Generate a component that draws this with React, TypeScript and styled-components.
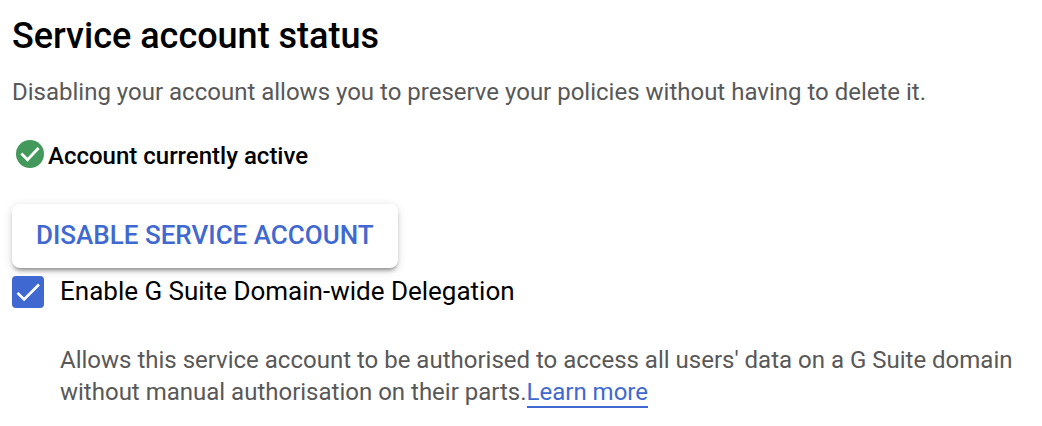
import React from "react";
import styled, { createGlobalStyle } from "styled-components";

const GlobalStyle = createGlobalStyle`
  body {
    margin: 0;
    background: #fff;
    color: #000;
    font-family: Roboto, sans-serif;
    font-size: 24px;
    line-height: 32px;
  }
`;

const Panel = styled.main`
  padding: 12px;
`;

const Title = styled.h2`
  margin: 0;
  font-size: 36px;
  font-weight: 500;
  line-height: 48px;
`;

const Description = styled.p`
  margin: 16px 0 0;
  color: #585858;
`;

const Status = styled.div`
  display: flex;
  align-items: flex-start;
  gap: 4px;
  margin-top: 32px;
  padding-left: 4px;
  font-weight: 500;
`;

const StatusIcon = styled.svg`
  width: 28px;
  height: 28px;
  flex: none;
`;

const ActionButton = styled.button`
  display: block;
  margin: 32px 0 8px;
  padding: 15px 24px 17px;
  border: 0;
  border-radius: 8px;
  background: #fff;
  box-shadow: 0 4px 4px -2px rgba(0, 0, 0, 0.4), 0 2px 10px rgba(0, 0, 0, 0.16);
  color: #3f69d1;
  font: 500 26px/32px Roboto, sans-serif;
  cursor: pointer;
`;

const Option = styled.label`
  display: flex;
  align-items: flex-start;
  gap: 16px;
  font-size: 26px;
  line-height: 30px;
`;

const Checkbox = styled.input`
  appearance: none;
  width: 32px;
  height: 32px;
  margin: 0;
  flex: none;
  border: 2px solid #3f69d1;
  border-radius: 4px;
  background: #fff;
`;

const CheckboxFrame = styled.span`
  display: grid;
  flex: none;

  > * {
    grid-area: 1 / 1;
  }

  ${Checkbox}:checked {
    background: #3f69d1;
  }
`;

const CheckMark = styled.svg`
  width: 32px;
  height: 32px;
  z-index: 1;
  pointer-events: none;
`;

const Hint = styled.p`
  margin: 36px 0 0 48px;
  color: #585858;
`;

const Link = styled.a`
  color: #3f69d1;
  text-decoration: none;
  border-bottom: 2px solid #3f69d1;
`;

export default function App() {
  return (
    <>
      <GlobalStyle />
      <Panel>
        <Title>Service account status</Title>
        <Description>
          Disabling your account allows you to preserve your policies without having to delete it.
        </Description>
        <Status>
          <StatusIcon viewBox="0 0 28 28" aria-hidden="true">
            <circle cx="14" cy="14" r="14" fill="#43995b" />
            <path d="M5.4 13.6l6.1 6.1L22.6 8" fill="none" stroke="#fff" strokeWidth="2.8" />
          </StatusIcon>
          Account currently active
        </Status>
        <ActionButton type="button">DISABLE SERVICE ACCOUNT</ActionButton>
        <Option htmlFor="delegation">
          <CheckboxFrame>
            <Checkbox id="delegation" type="checkbox" defaultChecked aria-describedby="delegation-hint" />
            <CheckMark viewBox="0 0 32 32" aria-hidden="true">
              <path d="M5.5 16.8l6.6 6.6L27 8.5" fill="none" stroke="#fff" strokeWidth="2.6" />
            </CheckMark>
          </CheckboxFrame>
          Enable G Suite Domain-wide Delegation
        </Option>
        <Hint id="delegation-hint">
          Allows this service account to be authorised to access all users' data on a G Suite domain
          without manual authorisation on their parts.<Link href="#learn-more">Learn more</Link>
        </Hint>
      </Panel>
    </>
  );
}
